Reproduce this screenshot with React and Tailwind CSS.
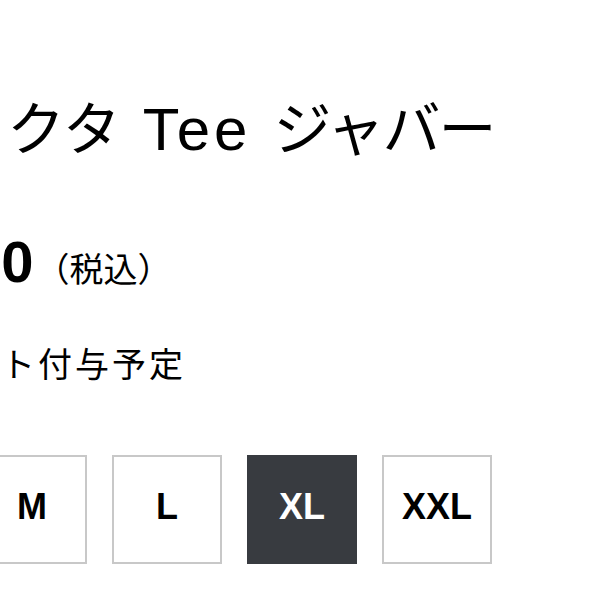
import React from 'react';

const sizes = ['M', 'L', 'XL', 'XXL'];

const SizeButton = ({ label, selected }) => (
  <button
    className={`flex h-[109px] w-[110px] shrink-0 items-center justify-center border-2 pb-[6px] text-[36px] font-bold ${
      selected ? 'border-[#383b40] bg-[#383b40] text-white' : 'border-[#c8c8c8] bg-white text-black'
    }`}
  >
    {label}
  </button>
);

const App = () => {
  return (
    <div
      className="min-h-screen w-[604px] overflow-hidden bg-white text-black"
      style={{ fontFamily: '"Liberation Sans", "Noto Sans CJK JP", sans-serif' }}
    >
      <div className="pt-[100px]">
        {/* product title, cut off on the left */}
        <h1 className="-ml-[51px] flex items-baseline whitespace-nowrap text-[58px] font-normal leading-none">
          <span>ラクタ</span>
          <span className="ml-[22px] text-[60px] tracking-[4px]">Tee</span>
          <span className="ml-[22px] tracking-[-2px]">ジャバー</span>
        </h1>

        {/* price */}
        <div className="mt-[73px] flex items-baseline whitespace-nowrap">
          <span className="-ml-[144px] text-[58px] font-bold leading-none">¥3,300</span>
          <span className="ml-[2px] text-[34px] leading-none">（税込）</span>
        </div>

        {/* points */}
        <p className="-ml-[110px] mt-[57px] whitespace-nowrap text-[34px] leading-none tracking-[3px]">
          ポイント付与予定
        </p>

        {/* size selector */}
        <div className="-ml-[23px] mt-[73px] flex gap-[25px]">
          {sizes.map((s) => (
            <SizeButton key={s} label={s} selected={s === 'XL'} />
          ))}
        </div>
      </div>
    </div>
  );
};

export default App;
